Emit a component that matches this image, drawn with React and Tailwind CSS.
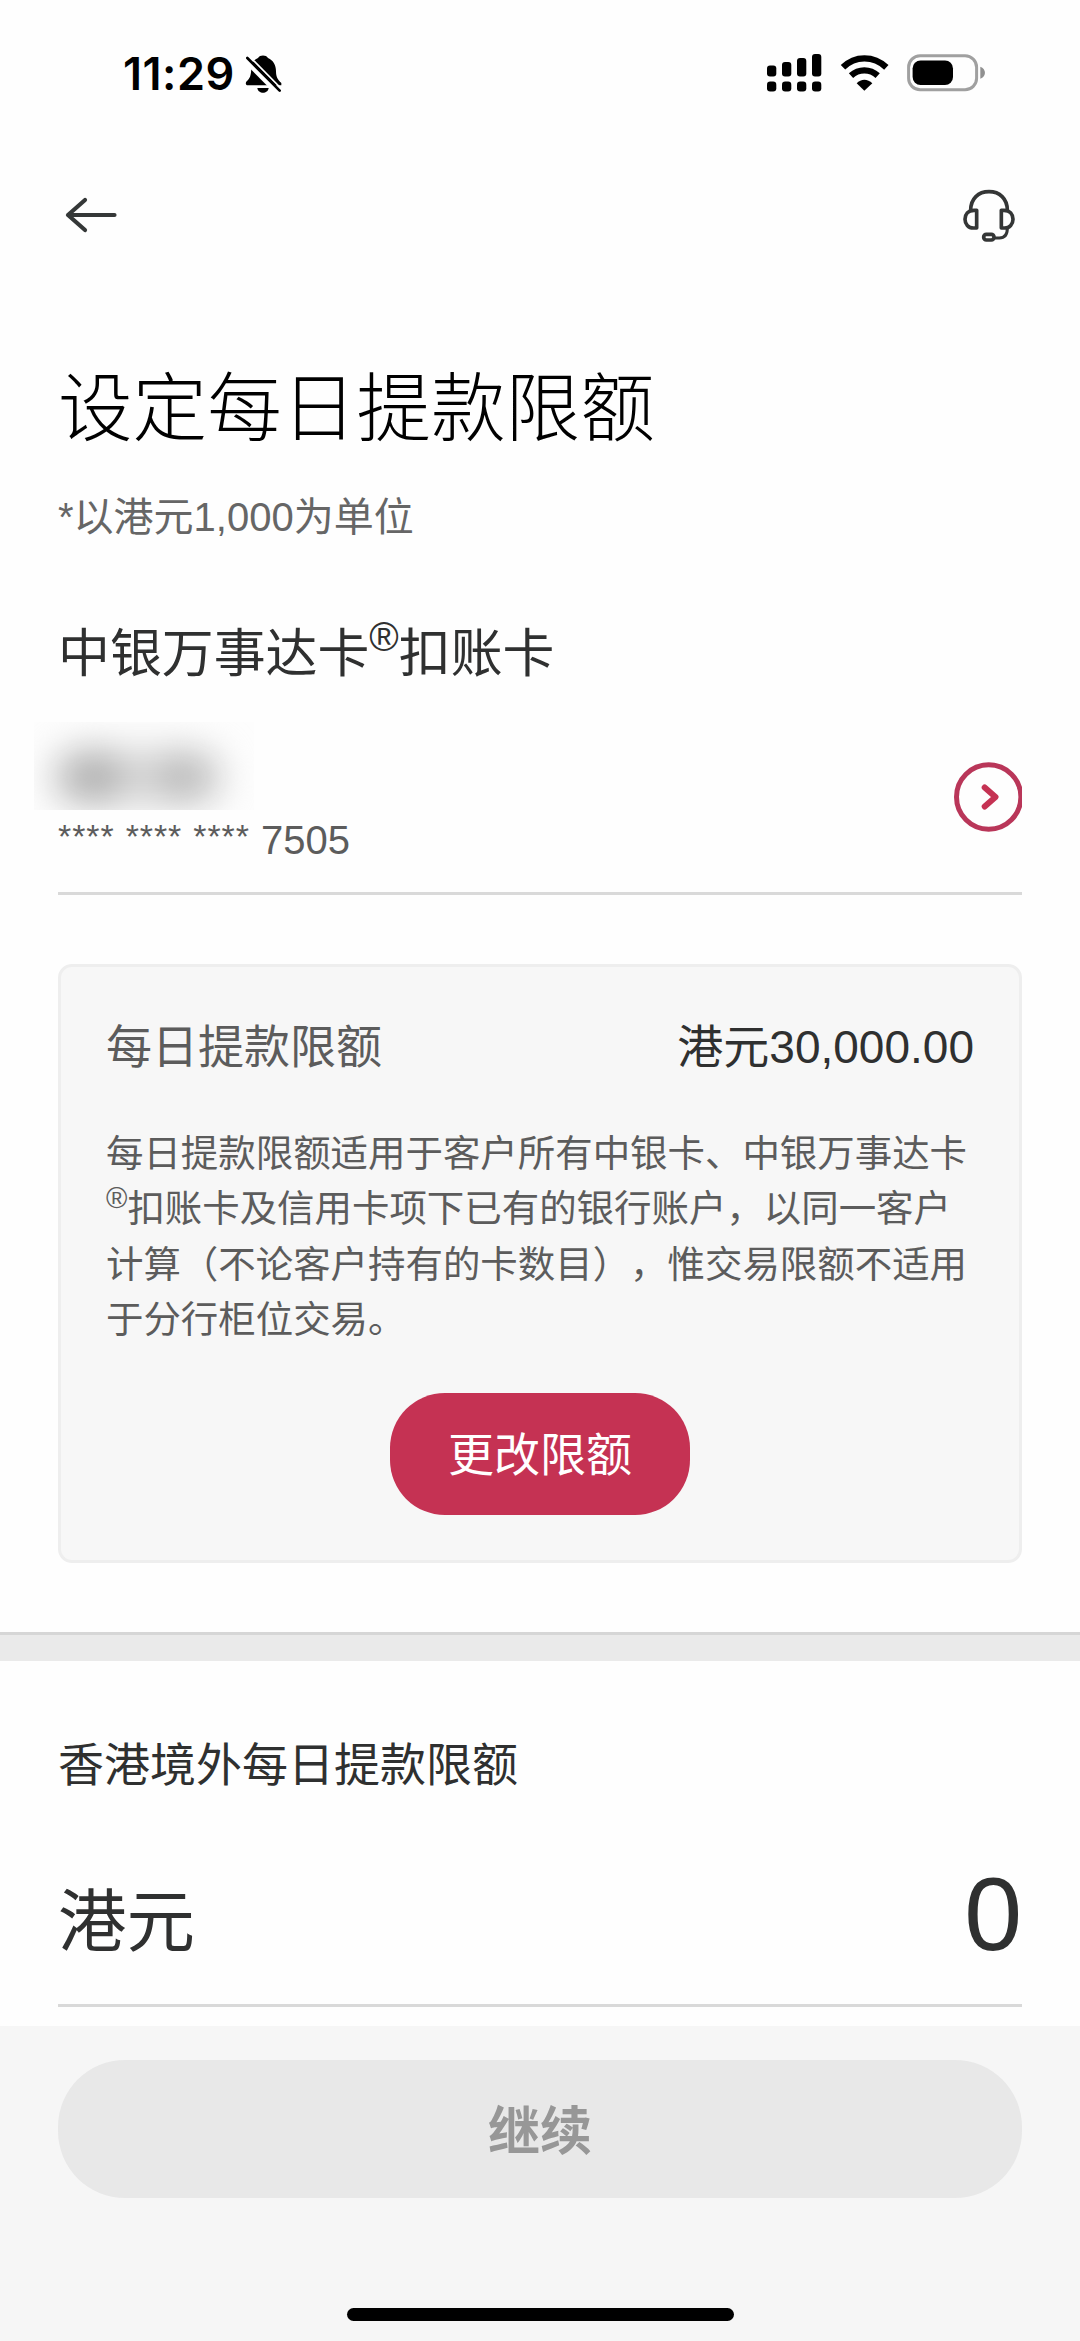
import { useState } from 'react';

const ACCOUNT = {
  mask: '**** **** ****',
  lastDigits: '7505',
};

const LIMIT = {
  currency: '港元',
  amount: '30,000.00',
};

// Registered mark, raised next to the card name
const Registered = ({ className }) => <span className={`leading-none ${className}`}>®</span>;

const BellOffIcon = () => (
  <svg viewBox="430 70 117 120" className="w-[39px] h-[40px]">
    <path
      d="M472 82C477 72 497 72 502 82C518 89 526 103 526 122C526 139 531 147 542 157V164H442C434 164 434 157 438 152C448 143 451 135 452 112C453 99 458 87 472 82Z"
      fill="#000"
    />
    <path d="M470 172H504C502 191 472 191 470 172Z" fill="#000" />
    <path d="M429 84L536 192" stroke="#fff" strokeWidth="14" />
    <path d="M447 78L550 182" stroke="#fff" strokeWidth="5" />
    <path d="M440 82L537 180" stroke="#000" strokeWidth="8" strokeLinecap="round" />
  </svg>
);

const SignalIcon = () => (
  <svg viewBox="0 0 56 40" className="w-[56px] h-[40px]" fill="#000">
    <rect x="0" y="12.5" width="9.3" height="11" rx="3" />
    <rect x="15" y="9" width="9.3" height="14.5" rx="3" />
    <rect x="30" y="5" width="9.3" height="18.5" rx="3" />
    <rect x="45" y="1" width="9.3" height="22.5" rx="3" />
    <rect x="0" y="28.5" width="9.3" height="10" rx="3.2" />
    <rect x="15" y="28.5" width="9.3" height="10" rx="3.2" />
    <rect x="30" y="28.5" width="9.3" height="10" rx="3.2" />
    <rect x="45" y="28.5" width="9.3" height="10" rx="3.2" />
  </svg>
);

const WifiIcon = () => (
  <svg viewBox="300 70 147 111" className="w-[49px] h-[37px]" fill="none">
    <path d="M309 110C345 74 401 74 439 110" stroke="#000" strokeWidth="19" />
    <path d="M333 135C356 114 390 114 413 135" stroke="#000" strokeWidth="19" />
    <path d="M350 158C363 144 383 144 397 158L373 180Z" fill="#000" />
  </svg>
);

const BatteryIcon = () => (
  <svg viewBox="0 0 80 38" className="w-[80px] h-[38px]" fill="none">
    <rect x="1.6" y="1.8" width="68" height="34" rx="11.5" stroke="#a0a0a0" strokeWidth="3" />
    <rect x="5.6" y="6.5" width="40.4" height="24.5" rx="8" fill="#000" />
    <path d="M73.3 12.8C79.5 15 79.5 22.5 73.3 24.8Z" fill="#909090" />
  </svg>
);

const BackIcon = () => (
  <svg viewBox="0 0 54 38" className="w-[54px] h-[38px]" fill="none" stroke="#353838" strokeWidth="4.2" strokeLinecap="round" strokeLinejoin="round">
    <path d="M4 19H50.5M21 4L4 19L21 34" />
  </svg>
);

const HeadsetIcon = () => (
  <svg viewBox="120 80 174 171" className="w-[58px] h-[57px]" fill="none" stroke="#343636" strokeWidth="11" strokeLinejoin="round">
    <path d="M152 150C152 115 175 94 207 94C239 94 262 115 262 150" />
    <path d="M170 150H162C144 150 135 163 135 177C135 191 145 203 160 203H170Z" />
    <path d="M244 150H252C270 150 279 163 279 177C279 191 269 203 254 203H244Z" />
    <path d="M262 204C262 224 253 233 238 233H223" strokeWidth="9" />
    <rect x="191" y="222" width="31" height="17" rx="8" />
  </svg>
);

const StatusBar = () => (
  <div className="flex h-[148px] items-center justify-between pl-[123px] pr-[93px]">
    <div className="flex items-center gap-[9px]">
      <span className="font-['Inter',sans-serif] text-[45px] font-semibold leading-[60px] tracking-[0.5px] text-black">
        11:29
      </span>
      <BellOffIcon />
    </div>
    <div className="flex items-center pb-[3px]">
      <SignalIcon />
      <div className="pl-[17px]">
        <WifiIcon />
      </div>
      <div className="pl-[18px]">
        <BatteryIcon />
      </div>
    </div>
  </div>
);

const AccountRow = () => (
  <div className="mt-[28px] flex h-[173px] items-start justify-between border-b-[3px] border-[#d9d9d9]">
    <div>
      {/* Hidden account name */}
      <div className="-ml-[24px] h-[88px] w-[220px] overflow-hidden bg-[#fdfdfd] pl-[17px] pt-[27px]">
        <div className="flex h-[56px] w-[172px] items-center justify-between rounded-full bg-[#dadada] px-[10px] blur-[18px]">
          <span className="h-[52px] w-[64px] rounded-full bg-[#b0b0b0]" />
          <span className="h-[48px] w-[60px] rounded-full bg-[#bababa]" />
        </div>
      </div>
      <p className="text-[40px] leading-[60px] text-[#5c5c5c]">
        <span className="align-[6px] text-[34px] leading-none tracking-[0.9px] [word-spacing:0.8px]">
          {ACCOUNT.mask}{' '}
        </span>
        {ACCOUNT.lastDigits}
      </p>
    </div>
    <button className="mt-[40px]" aria-label="选择账户">
      <svg viewBox="0 0 68 70" className="block h-[70px] w-[68px]" fill="none">
        <circle cx="34.7" cy="35" r="32.2" stroke="#b93659" strokeWidth="5" />
        <path d="M30.7 25.5L41.5 35L30.7 44.5" stroke="#c53253" strokeWidth="6" strokeLinecap="round" strokeLinejoin="round" />
      </svg>
    </button>
  </div>
);

const LimitCard = () => (
  <div className="mt-[69px] h-[599px] rounded-[14px] border-[3px] border-[#eeeeee] bg-[#f7f7f7] px-[45px] pt-[50px]">
    <div className="flex items-center justify-between text-[46px] leading-[60px]">
      <span className="text-[#5c5c5c]">每日提款限额</span>
      <span className="text-[#2f3030]">
        {LIMIT.currency}
        {LIMIT.amount}
      </span>
    </div>
    <p className="mt-[50px] text-[37.45px] leading-[55.4px] text-[#5c5c5c] [text-spacing-trim:space-all]">
      每日提款限额适用于客户所有中银卡、中银万事达卡
      <Registered className="align-[14px] text-[29px]" />
      扣账卡及信用卡项下已有的银行账户，以同一客户计算（不论客户持有的卡数目），惟交易限额不适用于分行柜位交易。
    </p>
    <div className="mt-[44px] flex justify-center">
      <button className="h-[122px] w-[300px] rounded-[55px] bg-[#c53253] pt-[2px] text-[46px] leading-[60px] text-white">
        更改限额
      </button>
    </div>
  </div>
);

const App = () => {
  const [overseasLimit] = useState(0);

  return (
    <div
      lang="zh-CN"
      className="flex min-h-[2341px] w-[1080px] flex-col bg-[#fefefe] font-['Liberation_Sans','Noto_Sans_CJK_SC',sans-serif]"
    >
      <StatusBar />

      <nav className="flex h-[134px] items-center justify-between pl-[64px] pr-[62px]">
        <BackIcon />
        <HeadsetIcon />
      </nav>

      <main className="flex-1">
        <section className="px-[58px]">
          <h1 className="mt-[82px] text-[74.6px] font-light leading-[90px] text-black">设定每日提款限额</h1>
          <p className="mt-[33px] text-[40px] leading-[60px] text-[#666666]">*以港元1,000为单位</p>
          <h2 className="mt-[67px] h-[80px] text-[51.9px] leading-[80px] text-[#2f3030]">
            中银万事达卡
            <Registered className="align-[21px] text-[40px]" />
            扣账卡
          </h2>
          <AccountRow />
          <LimitCard />
        </section>

        <div className="mt-[69px] h-[29px] border-t-[3px] border-[#d6d6d6] bg-[#eaeaea]" />

        <section className="px-[58px] pt-[74px]">
          <h3 className="text-[46px] leading-[60px] text-[#2f3030]">香港境外每日提款限额</h3>
          <div className="mt-[59px] flex h-[153px] items-start justify-between border-b-[3px] border-[#d9d9d9] text-[#2f3030]">
            <span className="mt-[29px] text-[68.5px] leading-[80px]">{LIMIT.currency}</span>
            <span className="text-[104px] leading-[120px]">{overseasLimit}</span>
          </div>
        </section>
      </main>

      <footer className="flex h-[315px] flex-col items-center bg-[#f6f6f6] px-[58px] pt-[34px]">
        <button disabled className="h-[138px] w-full rounded-[67px] bg-[#e8e8e8] pt-[6px] text-[52px] font-bold leading-[60px] text-[#979797]">
          继续
        </button>
        <div className="mt-[110px] h-[13px] w-[387px] rounded-full bg-black" />
      </footer>
    </div>
  );
};

export default App;
